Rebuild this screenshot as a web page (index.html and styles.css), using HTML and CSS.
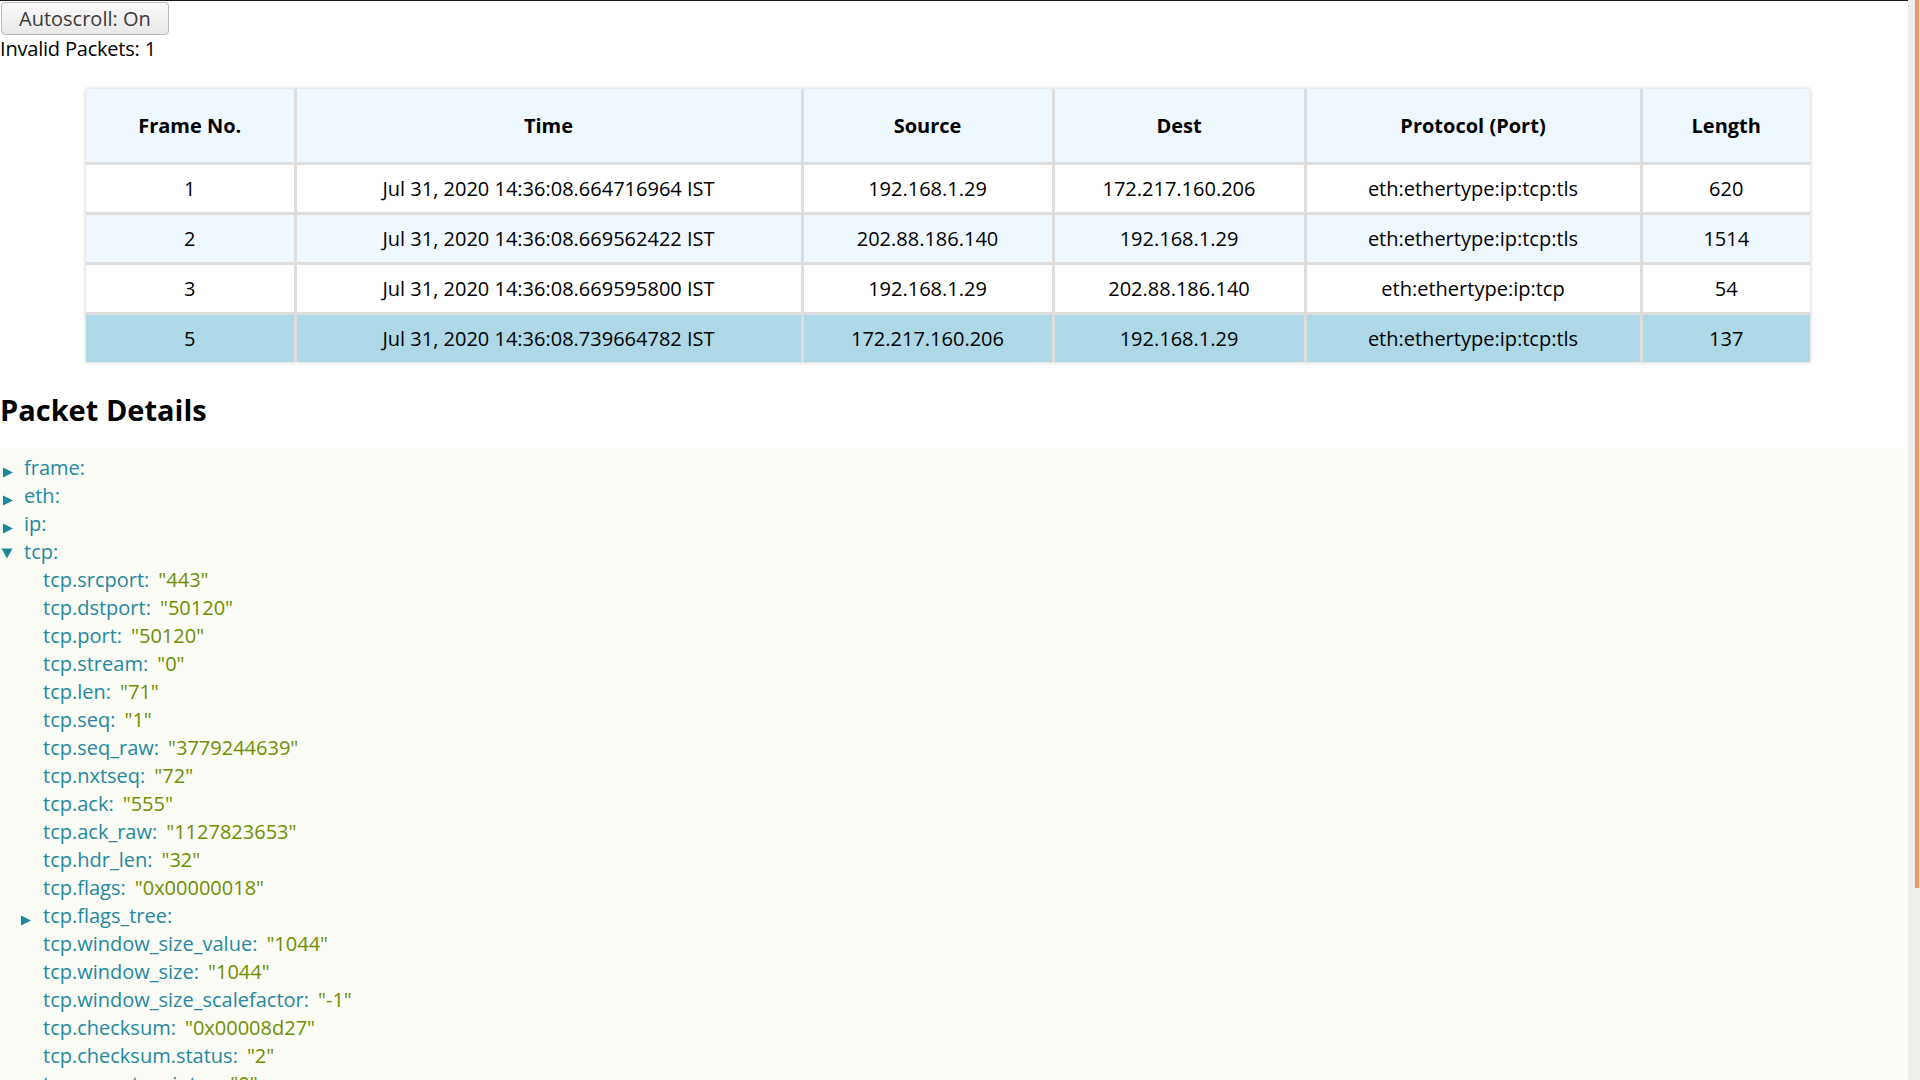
FILE: index.html
```html
<!DOCTYPE html>
<html lang="en">
<head>
<meta charset="utf-8">
<title>Packets</title>
<link rel="stylesheet" href="styles.css">
</head>
<body>
<div class="page">
  <main class="main">
    <button class="autoscroll">Autoscroll: On</button>
    <div class="invalid">Invalid Packets: 1</div>
    <table class="packets">
      <colgroup>
        <col class="c-frame"><col class="c-time"><col class="c-src"><col class="c-dst"><col class="c-proto"><col class="c-len">
      </colgroup>
      <thead>
        <tr><th>Frame No.</th><th>Time</th><th>Source</th><th>Dest</th><th>Protocol (Port)</th><th>Length</th></tr>
      </thead>
      <tbody>
        <tr><td>1</td><td>Jul 31, 2020 14:36:08.664716964 IST</td><td>192.168.1.29</td><td>172.217.160.206</td><td>eth:ethertype:ip:tcp:tls</td><td>620</td></tr>
        <tr class="alt"><td>2</td><td>Jul 31, 2020 14:36:08.669562422 IST</td><td>202.88.186.140</td><td>192.168.1.29</td><td>eth:ethertype:ip:tcp:tls</td><td>1514</td></tr>
        <tr><td>3</td><td>Jul 31, 2020 14:36:08.669595800 IST</td><td>192.168.1.29</td><td>202.88.186.140</td><td>eth:ethertype:ip:tcp</td><td>54</td></tr>
        <tr class="selected"><td>5</td><td>Jul 31, 2020 14:36:08.739664782 IST</td><td>172.217.160.206</td><td>192.168.1.29</td><td>eth:ethertype:ip:tcp:tls</td><td>137</td></tr>
      </tbody>
    </table>
    <h2 class="details-title">Packet Details</h2>
    <ul class="tree">
      <li class="node"><svg class="arrow" width="12" height="11" viewBox="0 0 12 11"><polygon points="1,0.5 11,5.5 1,10.5" /></svg><span class="key">frame:</span></li>
      <li class="node"><svg class="arrow" width="12" height="11" viewBox="0 0 12 11"><polygon points="1,0.5 11,5.5 1,10.5" /></svg><span class="key">eth:</span></li>
      <li class="node"><svg class="arrow" width="12" height="11" viewBox="0 0 12 11"><polygon points="1,0.5 11,5.5 1,10.5" /></svg><span class="key">ip:</span></li>
      <li class="node open"><svg class="arrow down" width="12" height="11" viewBox="0 0 12 11"><polygon points="0.5,0.5 11.5,0.5 6,10.5" /></svg><span class="key">tcp:</span>
        <ul class="tree sub">
          <li class="leaf"><span class="key">tcp.srcport:</span><span class="val">"443"</span></li>
          <li class="leaf"><span class="key">tcp.dstport:</span><span class="val">"50120"</span></li>
          <li class="leaf"><span class="key">tcp.port:</span><span class="val">"50120"</span></li>
          <li class="leaf"><span class="key">tcp.stream:</span><span class="val">"0"</span></li>
          <li class="leaf"><span class="key">tcp.len:</span><span class="val">"71"</span></li>
          <li class="leaf"><span class="key">tcp.seq:</span><span class="val">"1"</span></li>
          <li class="leaf"><span class="key">tcp.seq_raw:</span><span class="val">"3779244639"</span></li>
          <li class="leaf"><span class="key">tcp.nxtseq:</span><span class="val">"72"</span></li>
          <li class="leaf"><span class="key">tcp.ack:</span><span class="val">"555"</span></li>
          <li class="leaf"><span class="key">tcp.ack_raw:</span><span class="val">"1127823653"</span></li>
          <li class="leaf"><span class="key">tcp.hdr_len:</span><span class="val">"32"</span></li>
          <li class="leaf"><span class="key">tcp.flags:</span><span class="val">"0x00000018"</span></li>
          <li class="node"><svg class="arrow" width="12" height="11" viewBox="0 0 12 11"><polygon points="1,0.5 11,5.5 1,10.5" /></svg><span class="key">tcp.flags_tree:</span></li>
          <li class="leaf"><span class="key">tcp.window_size_value:</span><span class="val">"1044"</span></li>
          <li class="leaf"><span class="key">tcp.window_size:</span><span class="val">"1044"</span></li>
          <li class="leaf"><span class="key">tcp.window_size_scalefactor:</span><span class="val">"-1"</span></li>
          <li class="leaf"><span class="key">tcp.checksum:</span><span class="val">"0x00008d27"</span></li>
          <li class="leaf"><span class="key">tcp.checksum.status:</span><span class="val">"2"</span></li>
          <li class="leaf"><span class="key">tcp.urgent_pointer:</span><span class="val">"0"</span></li>
          <li class="node"><svg class="arrow" width="12" height="11" viewBox="0 0 12 11"><polygon points="1,0.5 11,5.5 1,10.5" /></svg><span class="key">tcp.analysis:</span></li>
          <li class="leaf"><span class="key">tcp.time_relative:</span><span class="val">"0.074947818"</span></li>
          <li class="leaf"><span class="key">tcp.time_delta:</span><span class="val">"0.070069069"</span></li>
          <li class="leaf"><span class="key">tcp.payload:</span><span class="val">"17:03:03:00:42"</span></li>
        </ul>
      </li>
      <li class="node"><svg class="arrow" width="12" height="11" viewBox="0 0 12 11"><polygon points="1,0.5 11,5.5 1,10.5" /></svg><span class="key">tls:</span></li>
    </ul>
  </main>
  <aside class="scrollbar"><div class="thumb"></div></aside>
</div>
</body>
</html>
```
FILE: styles.css
```css
html, body {
  margin: 0;
  padding: 0;
  background: #ffffff;
}
body {
  font-family: "Open Sans", "Noto Sans", sans-serif;
  font-size: 20px;
  color: #000;
}
.page {
  display: flex;
  align-items: stretch;
  min-height: 100vh;
}
.main {
  flex: 1;
  min-width: 0;
  border-top: 1px solid #1a1a1a;
}
.scrollbar {
  width: 12px;
  flex: none;
  background: #efedec;
}
.thumb {
  width: 4px;
  height: 888px;
  margin-left: 7px;
  background: #f4936c;
}
.autoscroll {
  display: block;
  margin: 1px 0 0 1px;
  height: 33px;
  padding: 0 17px;
  font-family: inherit;
  font-size: 20px;
  color: #3a3a3a;
  background: linear-gradient(#f9f9f9, #e9e9e9);
  border: 1px solid #b9b9b9;
  border-radius: 4px;
  line-height: 31px;
}
.invalid {
  line-height: 24px;
  margin-top: 2px;
  letter-spacing: -0.2px;
}
.packets {
  margin: 28px 0 0 86px;
  width: 1724px;
  border-collapse: collapse;
  border-style: hidden;
  box-shadow: 0 0 4px rgba(0, 0, 0, 0.22);
  table-layout: fixed;
}
.c-frame { width: 209px; }
.c-time { width: 507px; }
.c-src { width: 251px; }
.c-dst { width: 252px; }
.c-proto { width: 336px; }
.c-len { width: 169px; }
.packets th, .packets td {
  border: 3px solid #dddddd;
  text-align: center;
  line-height: 24px;
}
.packets th {
  background: #eff7ff;
  font-weight: 700;
  padding: 25px 0 24px;
}
.packets td {
  padding: 11.5px 0;
  background: #ffffff;
}
.packets tr.alt td {
  background: #eff7ff;
}
.packets tr.selected td {
  background: #add8e6;
}
.details-title {
  font-size: 29px;
  font-weight: 700;
  line-height: 36px;
  margin: 30px 0 20px 0;
}
.tree {
  list-style: none;
  margin: 0;
  padding: 6px 0 0 0;
  background: #fbfcf6;
  line-height: 28px;
}
.tree.sub {
  padding: 0;
  margin-left: -24px;
  background: transparent;
}
.tree li {
  display: block;
  position: relative;
  white-space: nowrap;
  padding-left: 24px;
}
.tree.sub > li {
  padding-left: 43px;
}
.arrow {
  position: absolute;
  left: 2px;
  top: 13px;
  fill: #1d889d;
}
.arrow.down {
  left: 1px;
  top: 10px;
}
.tree.sub > li > .arrow {
  left: 20px;
}
.key {
  color: #24889e;
}
.val {
  color: #6f8e00;
  margin-left: 9px;
}
```
